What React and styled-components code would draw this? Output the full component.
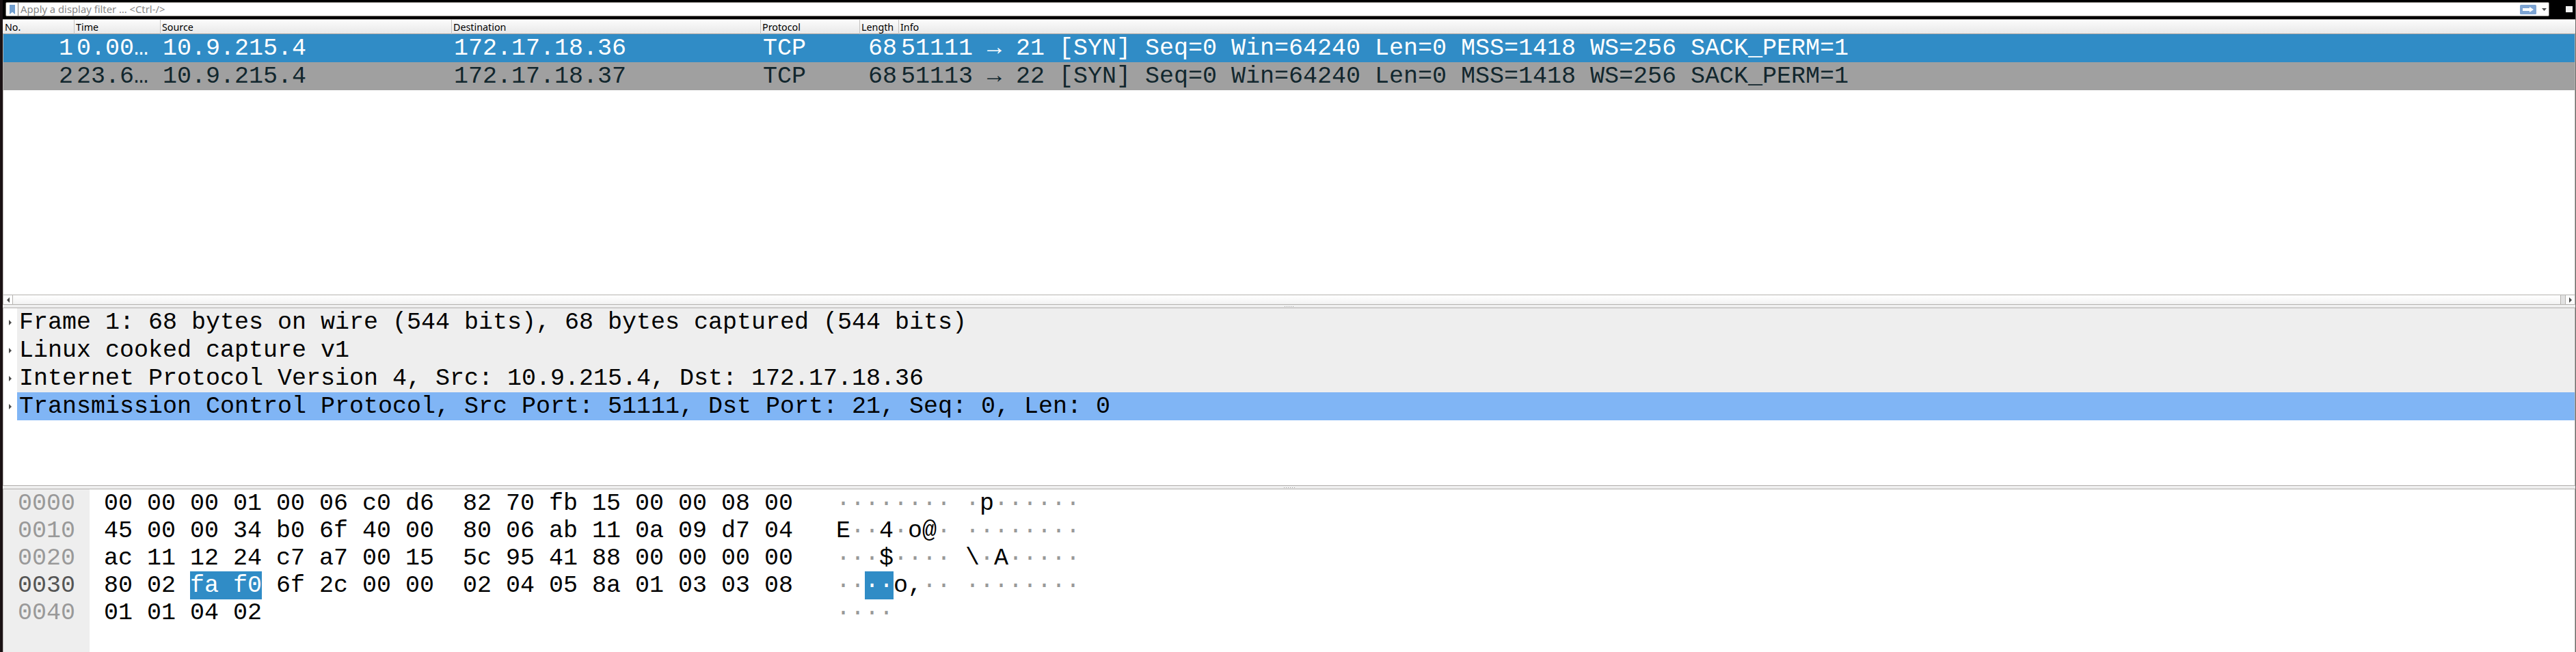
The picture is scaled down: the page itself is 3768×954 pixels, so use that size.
import React from "react";
import styled, { createGlobalStyle, css } from "styled-components";

const Global = createGlobalStyle`
  * { box-sizing: border-box; }
  body { margin: 0; background: #000; overflow: hidden; }
`;

const mono = css`
  font-family: "Liberation Mono", monospace;
  font-size: 35px;
  letter-spacing: -0.004px;
  white-space: pre;
`;
const ui = css`
  font-family: "Noto Sans", sans-serif;
  white-space: pre;
`;

const Window = styled.div`
  width: 3768px;
  height: 954px;
  display: flex;
  flex-direction: column;
  background: #000;
  border-left: 4px solid #1a1214;
  border-right: 1px solid #6b6966;
`;

const FilterBar = styled.div`
  flex: none;
  height: 28px;
  padding: 3px 3px 4px 4px;
  display: flex;
  align-items: center;
`;
const FilterField = styled.div`
  width: 3721px;
  height: 21px;
  display: flex;
  align-items: center;
  background: #fff;
  border: 1px solid #77736e;
  border-radius: 2px;
  padding-right: 3px;
`;
const Bookmark = styled.div`
  width: 18px;
  height: 19px;
  display: flex;
  align-items: center;
  justify-content: center;
  border-right: 1px solid #77736e;
`;
const Placeholder = styled.span`
  ${ui}
  flex: 1;
  padding-left: 3px;
  color: #868686;
  font-size: 14.8px;
  line-height: 19px;
`;
const ApplyIcon = styled.svg`
  margin-right: 8px;
`;
const Knob = styled.div`
  width: 10px;
  height: 9px;
  margin-left: 24px;
  background: #f2f2f2;
`;

const Columns = styled.div`
  display: grid;
  grid-template-columns: 105px 126px 426px 452px 145px 57px 1fr;
`;
const Header = styled(Columns)`
  height: 22px;
  flex: none;
  border-top: 1px solid #b0aeac;
  border-bottom: 1px solid #a5a3a1;
  background: linear-gradient(#fbfbfb, #e9e9e9);
`;
const HeaderCell = styled.div`
  ${ui}
  font-size: 14.3px;
  line-height: 20px;
  padding: 1px 0 0 ${(p) => p.$pad}px;
  color: #000;
  border-right: ${(p) => (p.$last ? "none" : "1px solid #c4c2c0")};
`;

const Pane = styled.div`
  flex: none;
  height: ${(p) => p.$h}px;
  background: #fff;
  border-left: 1px solid #b5b3b0;
  border-right: 1px solid #b5b3b0;
  overflow: hidden;
`;
const Packet = styled(Columns)`
  ${mono}
  height: 41px;
  line-height: 43px;
  color: ${(p) => (p.$selected ? "#fff" : "#12272e")};
  background: ${(p) => (p.$selected ? "#308cc6" : "#a0a0a0")};
`;
const Cell = styled.div`
  min-width: 0;
  padding-left: ${(p) => p.$l || 0}px;
  padding-right: ${(p) => p.$r || 0}px;
  text-align: ${(p) => (p.$r ? "right" : "left")};
`;

const Scrollbar = styled.div`
  flex: none;
  height: 15px;
  display: flex;
  border: 1px solid #b5b3b0;
  background: linear-gradient(#fff, #f3f3f3);
`;
const ScrollEnd = styled.div`
  width: ${(p) => (p.$left ? 14 : 13)}px;
  display: flex;
  align-items: center;
  justify-content: center;
  background: #fcfcfc;
  border-right: ${(p) => (p.$left ? "1px solid #b5b3b0" : "none")};
`;
const ScrollHandle = styled.div`
  width: 8px;
  margin-left: auto;
  background: #e2e2e2;
  border: solid #b5b3b0;
  border-width: 0 1px;
`;
const Splitter = styled.div`
  flex: none;
  height: ${(p) => p.$h}px;
  background: #efefef;
  border-bottom: 1px solid #b0aeac;
  border-top: ${(p) => (p.$top ? "1px solid #b0aeac" : "none")};
  display: flex;
  align-items: center;
  justify-content: center;
  gap: 2px;
`;
const Grip = styled.i`
  width: 1px;
  height: 1px;
  background: #a0a0a0;
`;

const TreeRow = styled.div`
  display: flex;
  height: 41px;
`;
const Expander = styled.div`
  width: 20px;
  display: flex;
  align-items: center;
  padding-left: 8px;
`;
const TreeText = styled.div`
  ${mono}
  flex: 1;
  line-height: 43px;
  padding-left: 3px;
  color: #000;
  background: ${(p) => (p.$selected ? "#80b5f5" : "#eeeeee")};
`;

const HexPane = styled(Pane)`
  display: flex;
`;
const HexColumn = styled.div`
  ${mono}
  line-height: 42px;
  color: #000;
  width: ${(p) => p.$w}px;
  padding-left: ${(p) => p.$indent || 0}px;
  background: ${(p) => p.$bg || "transparent"};
`;
const HexLine = styled.div`
  height: 40px;
  color: ${(p) => p.$color || "inherit"};
`;
const Mark = styled.span`
  display: inline-block;
  height: 41px;
  vertical-align: top;
  color: #fff;
  background: #308cc6;
`;
const Dim = styled.span`
  color: #999;
`;

const HEADERS = ["No.", "Time", "Source", "Destination", "Protocol", "Length", "Info"];
const PACKETS = [
  ["1", "0.00…", "10.9.215.4", "172.17.18.36", "TCP", "68", "51111 → 21 [SYN] Seq=0 Win=64240 Len=0 MSS=1418 WS=256 SACK_PERM=1"],
  ["2", "23.6…", "10.9.215.4", "172.17.18.37", "TCP", "68", "51113 → 22 [SYN] Seq=0 Win=64240 Len=0 MSS=1418 WS=256 SACK_PERM=1"],
];
const CELL_PAD = [
  { $r: 3 }, { $l: 2 }, { $l: 2 }, { $l: 2 }, { $l: 2 }, { $r: 4 }, { $l: 2 },
];
const DETAILS = [
  "Frame 1: 68 bytes on wire (544 bits), 68 bytes captured (544 bits)",
  "Linux cooked capture v1",
  "Internet Protocol Version 4, Src: 10.9.215.4, Dst: 172.17.18.36",
  "Transmission Control Protocol, Src Port: 51111, Dst Port: 21, Seq: 0, Len: 0",
];
const OFFSETS = ["0000", "0010", "0020", "0030", "0040"];
const BYTES = [
  "00 00 00 01 00 06 c0 d6  82 70 fb 15 00 00 08 00",
  "45 00 00 34 b0 6f 40 00  80 06 ab 11 0a 09 d7 04",
  "ac 11 12 24 c7 a7 00 15  5c 95 41 88 00 00 00 00",
  "80 02 [fa f0] 6f 2c 00 00  02 04 05 8a 01 03 03 08",
  "01 01 04 02",
];
const ASCII = [
  "········ ·p······",
  "E··4·o@· ········",
  "···$···· \\·A·····",
  "··[··]o,·· ········",
  "····",
];

/* Brackets delimit the selected bytes; runs of middle dots are dimmed. */
function renderLine(text) {
  return text.split(/(\[[^\]]*\])/).map((part, i) =>
    part[0] === "[" ? (
      <Mark key={i}>{part.slice(1, -1)}</Mark>
    ) : (
      part.split(/(·+)/).map((s, j) => (s[0] === "·" ? <Dim key={`${i}-${j}`}>{s}</Dim> : s))
    )
  );
}

function Triangle({ left }) {
  return (
    <svg width="4" height="8" viewBox="0 0 4 8">
      <path d={left ? "M4 0V8L0 4Z" : "M0 0V8L4 4Z"} fill="#4a4a4a" />
    </svg>
  );
}

function Grips({ count }) {
  return Array.from({ length: count }, (_, i) => <Grip key={i} />);
}

export default function App() {
  return (
    <Window>
      <Global />
      <FilterBar>
        <FilterField>
          <Bookmark>
            <svg width="8" height="14" viewBox="0 0 8 14">
              <path d="M0 0H8V14L4 10.5L0 14Z" fill="#729fcf" />
            </svg>
          </Bookmark>
          <Placeholder>{"Apply a display filter … <Ctrl-/>"}</Placeholder>
          <ApplyIcon width="24" height="14" viewBox="0 0 24 14">
            <rect width="24" height="14" rx="1.5" fill="#7da4d3" />
            <path d="M4 5H14V3L20 7L14 11V9H4Z" fill="#fff" />
          </ApplyIcon>
          <svg width="7" height="4" viewBox="0 0 7 4">
            <path d="M0 0H7L3.5 4Z" fill="#4a4a4a" />
          </svg>
        </FilterField>
        <Knob />
      </FilterBar>

      <Header>
        {HEADERS.map((h, i) => (
          <HeaderCell key={h} $last={i === 6} $pad={i === 0 ? 3 : 2}>{h}</HeaderCell>
        ))}
      </Header>
      <Pane $h={381}>
        {PACKETS.map((row, r) => (
          <Packet key={r} $selected={r === 0}>
            {row.map((c, i) => (
              <Cell key={i} {...CELL_PAD[i]}>{c}</Cell>
            ))}
          </Packet>
        ))}
      </Pane>
      <Scrollbar>
        <ScrollEnd $left><Triangle left /></ScrollEnd>
        <ScrollHandle />
        <ScrollEnd><Triangle /></ScrollEnd>
      </Scrollbar>
      <Splitter $h={5}><Grips count={5} /></Splitter>

      <Pane $h={259}>
        {DETAILS.map((d, i) => (
          <TreeRow key={d}>
            <Expander><Triangle /></Expander>
            <TreeText $selected={i === 3}>{d}</TreeText>
          </TreeRow>
        ))}
      </Pane>
      <Splitter $h={6} $top><Grips count={6} /></Splitter>

      <HexPane $h={238}>
        <HexColumn $w={126} $indent={21} $bg="#eeeeee">
          {OFFSETS.map((o, i) => (
            <HexLine key={o} $color={i === 3 ? "#555" : "#999"}>{o}</HexLine>
          ))}
        </HexColumn>
        <HexColumn $w={1092} $indent={21}>
          {BYTES.map((b) => <HexLine key={b}>{renderLine(b)}</HexLine>)}
        </HexColumn>
        <HexColumn $w={400}>
          {ASCII.map((a) => <HexLine key={a}>{renderLine(a)}</HexLine>)}
        </HexColumn>
      </HexPane>
    </Window>
  );
}
